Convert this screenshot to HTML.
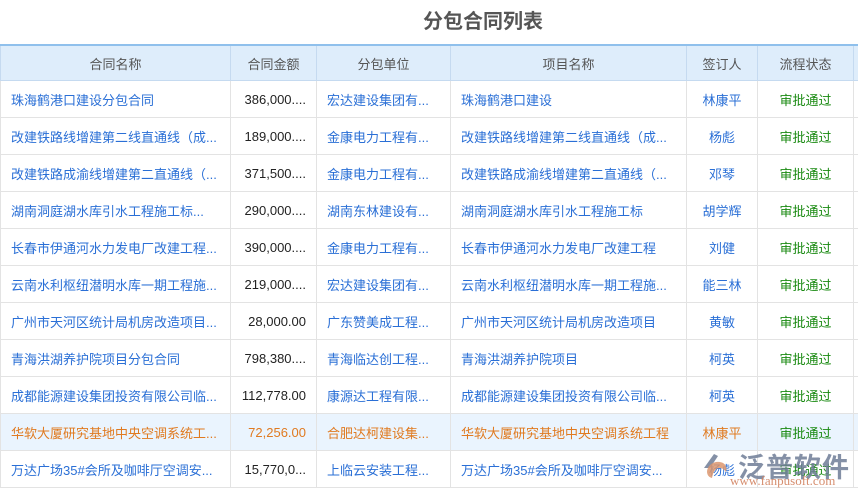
<!DOCTYPE html>
<html><head><meta charset="utf-8"><style>
html,body{margin:0;padding:0;background:#fff;width:858px;height:492px;overflow:hidden}
body{font-family:"Liberation Sans","Noto Sans CJK SC",sans-serif;position:relative}
h1{position:absolute;left:0;width:966px;top:5px;margin:0;text-align:center;font-size:20px;font-weight:bold;color:#555;font-family:"Liberation Sans","Noto Sans CJK SC",sans-serif}
table{position:absolute;left:0;top:44px;border-collapse:collapse;table-layout:fixed;width:866px;font-size:13px}
td,th{height:36px;border:1px solid #e3e3e3;white-space:nowrap;overflow:hidden;padding:0 10px;color:#2a6fd6;font-weight:normal}
th{background:#deedfb;color:#555;border-color:#c5daf0;border-top:2px solid #8fc0ec;height:34px;text-align:center}
td.a{color:#222;text-align:right}
td.c{text-align:center}
td.g{color:#1a8a12;text-align:center}
tr.h td{background:#eaf4fe;color:#e07a20}
tr.h td.g{color:#1a8a12}
.wm{position:absolute;left:738px;top:446px;font-size:27px;color:rgba(110,125,150,.85);font-weight:bold;letter-spacing:1px}
.wm2{position:absolute;left:730px;top:473px;font-size:13px;color:rgba(210,130,95,.9);font-family:"Liberation Serif",serif}
.logo{position:absolute;left:700px;top:452px;width:30px;height:28px}
</style></head><body>
<h1>分包合同列表</h1>
<table>
<colgroup><col style="width:230px"><col style="width:86px"><col style="width:134px"><col style="width:236px"><col style="width:71px"><col style="width:96px"><col style="width:13px"></colgroup>
<tr><th>合同名称</th><th>合同金额</th><th>分包单位</th><th>项目名称</th><th>签订人</th><th>流程状态</th><th></th></tr>
<tr><td>珠海鹤港口建设分包合同</td><td class="a">386,000....</td><td>宏达建设集团有...</td><td>珠海鹤港口建设</td><td class="c">林康平</td><td class="g">审批通过</td><td></td></tr>
<tr><td>改建铁路线增建第二线直通线（成...</td><td class="a">189,000....</td><td>金康电力工程有...</td><td>改建铁路线增建第二线直通线（成...</td><td class="c">杨彪</td><td class="g">审批通过</td><td></td></tr>
<tr><td>改建铁路成渝线增建第二直通线（...</td><td class="a">371,500....</td><td>金康电力工程有...</td><td>改建铁路成渝线增建第二直通线（...</td><td class="c">邓琴</td><td class="g">审批通过</td><td></td></tr>
<tr><td>湖南洞庭湖水库引水工程施工标...</td><td class="a">290,000....</td><td>湖南东林建设有...</td><td>湖南洞庭湖水库引水工程施工标</td><td class="c">胡学辉</td><td class="g">审批通过</td><td></td></tr>
<tr><td>长春市伊通河水力发电厂改建工程...</td><td class="a">390,000....</td><td>金康电力工程有...</td><td>长春市伊通河水力发电厂改建工程</td><td class="c">刘健</td><td class="g">审批通过</td><td></td></tr>
<tr><td>云南水利枢纽潜明水库一期工程施...</td><td class="a">219,000....</td><td>宏达建设集团有...</td><td>云南水利枢纽潜明水库一期工程施...</td><td class="c">能三林</td><td class="g">审批通过</td><td></td></tr>
<tr><td>广州市天河区统计局机房改造项目...</td><td class="a">28,000.00</td><td>广东赞美成工程...</td><td>广州市天河区统计局机房改造项目</td><td class="c">黄敏</td><td class="g">审批通过</td><td></td></tr>
<tr><td>青海洪湖养护院项目分包合同</td><td class="a">798,380....</td><td>青海临达创工程...</td><td>青海洪湖养护院项目</td><td class="c">柯英</td><td class="g">审批通过</td><td></td></tr>
<tr><td>成都能源建设集团投资有限公司临...</td><td class="a">112,778.00</td><td>康源达工程有限...</td><td>成都能源建设集团投资有限公司临...</td><td class="c">柯英</td><td class="g">审批通过</td><td></td></tr>
<tr class="h"><td>华软大厦研究基地中央空调系统工...</td><td class="a">72,256.00</td><td>合肥达柯建设集...</td><td>华软大厦研究基地中央空调系统工程</td><td class="c">林康平</td><td class="g">审批通过</td><td></td></tr>
<tr><td>万达广场35#会所及咖啡厅空调安...</td><td class="a">15,770,0...</td><td>上临云安装工程...</td><td>万达广场35#会所及咖啡厅空调安...</td><td class="c">杨彪</td><td class="g">审批通过</td><td></td></tr>
</table>
<svg class="logo" viewBox="0 0 30 28"><path d="M14 2 L4 16 L10 16 L18 4 Z" fill="rgba(110,125,150,.85)"/><path d="M12 26 C4 24 6 12 16 10 C24 9 28 14 26 20 C22 14 14 14 12 26 Z" fill="rgba(220,150,110,.85)"/></svg>
<div class="wm">泛普软件</div>
<div class="wm2">www.fanpusoft.com</div>
</body></html>
